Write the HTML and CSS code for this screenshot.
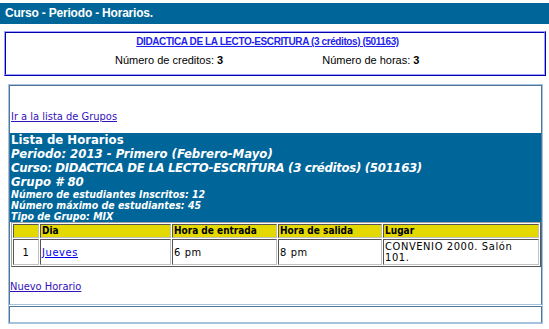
FILE: index.html
```html
<!DOCTYPE html>
<html lang="es">
<head>
    <meta charset="UTF-8">
    <title>Curso - Periodo - Horarios.</title>
    <link rel="stylesheet" href="styles.css">
</head>
<body>
    <div class="titlebar">Curso - Periodo - Horarios.</div>

    <div class="info">
        <div class="info-cell">
            <div class="info-course"><a href="#">DIDACTICA DE LA LECTO-ESCRITURA (3 créditos) (501163)</a></div>
            <div class="info-row">
                <span>Número de creditos: <b>3</b></span>
                <span>Número de horas: <b>3</b></span>
            </div>
        </div>
    </div>

    <div class="panel">
        <div class="panel-cell">
            <div class="back-link"><a href="#" class="visited">Ir a la lista de Grupos</a></div>

            <div class="group-head">
                <div class="big">Lista de Horarios</div>
                <div class="big italic">Periodo: 2013 - Primero (Febrero-Mayo)</div>
                <div class="big italic course-line">Curso: DIDACTICA DE LA LECTO-ESCRITURA (3 créditos) (501163)</div>
                <div class="big italic">Grupo # 80</div>
                <div class="small">Número de estudiantes Inscritos: 12</div>
                <div class="small">Número máximo de estudiantes: 45</div>
                <div class="small">Tipo de Grupo: MIX</div>
            </div>

            <table class="schedule">
                <tr>
                    <th class="col-num"></th>
                    <th class="col-day">Dia</th>
                    <th class="col-in">Hora de entrada</th>
                    <th class="col-out">Hora de salida</th>
                    <th>Lugar</th>
                </tr>
                <tr>
                    <td class="num">1</td>
                    <td><a href="#">Jueves</a></td>
                    <td>6 pm</td>
                    <td>8 pm</td>
                    <td>CONVENIO 2000. Salón 101.</td>
                </tr>
            </table>

            <div class="new-link"><a href="#" class="visited">Nuevo Horario</a></div>
        </div>
        <div class="panel-cell panel-foot"></div>
    </div>
</body>
</html>
```

FILE: styles.css
```css
* {
    box-sizing: border-box;
    margin: 0;
    padding: 0;
}

body {
    padding-top: 3px;
    font-family: "DejaVu Sans Condensed", "DejaVu Sans", sans-serif;
    font-size: 11px;
    color: #000;
    background-color: #fff;
}

.titlebar {
    height: 21px;
    line-height: 21px;
    padding-left: 5px;
    background-color: #006699;
    color: #fff;
    font-family: "Liberation Sans", Arial, sans-serif;
    font-weight: bold;
    font-size: 12px;
    letter-spacing: -0.2px;
}

/* course info box */
.info {
    margin: 7px 3px 0 4px;
    border: 1px solid;
    border-color: #a0a0ff #0000a8 #0000a8 #a0a0ff;
}

.info-cell {
    height: 43px;
    padding-top: 2px;
    border: 1px solid;
    border-color: #0000a8 #a0a0ff #a0a0ff #0000a8;
    font-family: "Liberation Sans", Arial, sans-serif;
}

.info-course {
    text-align: center;
    line-height: 13px;
    font-size: 10px;
    font-weight: bold;
    letter-spacing: -0.4px;
    padding-right: 15px;
}

.info-course a {
    color: #1f1fee;
}

.info-row {
    display: flex;
    gap: 99px;
    margin-top: 5px;
    padding-left: 109px;
    line-height: 14px;
    font-size: 11px;
}

/* group panel */
.panel {
    display: flex;
    flex-direction: column;
    gap: 1px;
    margin: 8px 6px 0 8px;
    border: 1px solid #a6c2dc;
}

.panel-cell {
    border: 1px solid #52759a;
    border-bottom-color: #a6c2dc;
}

.panel-foot {
    height: 17px;
}

a {
    color: #0000ee;
}

a.visited {
    color: #3311bb;
}

.back-link {
    padding: 24px 0 10px 1px;
    line-height: 13px;
}

.group-head {
    padding: 0 1px;
    background-color: #006699;
    color: #fff;
    font-weight: bold;
}

.big {
    font-size: 13px;
    line-height: 14px;
}

.italic {
    font-style: italic;
}

.course-line {
    letter-spacing: -0.3px;
}

.small {
    font-size: 10.5px;
    line-height: 11px;
    font-style: italic;
}

.schedule {
    width: 530px;
    margin-left: 1px;
    border: 1px solid;
    border-color: #a0a0a0 #555 #555 #a0a0a0;
    border-spacing: 1px;
}

.schedule th,
.schedule td {
    padding: 0 1px;
    border: 1px solid;
    border-color: #555 #c0c0c0 #c0c0c0 #555;
    text-align: left;
    vertical-align: middle;
}

.schedule th {
    height: 14px;
    line-height: 12px;
    background-color: #e3d900;
    font-size: 10px;
    font-weight: bold;
}

.schedule td {
    height: 26px;
    line-height: 11px;
    font-size: 11px;
    letter-spacing: 0.6px;
}

.schedule td.num {
    text-align: center;
}

.col-num {
    width: 26px;
}

.col-day {
    width: 131px;
}

.col-in {
    width: 105px;
}

.col-out {
    width: 104px;
}

.new-link {
    padding: 13px 0 11px;
    line-height: 13px;
}
```
